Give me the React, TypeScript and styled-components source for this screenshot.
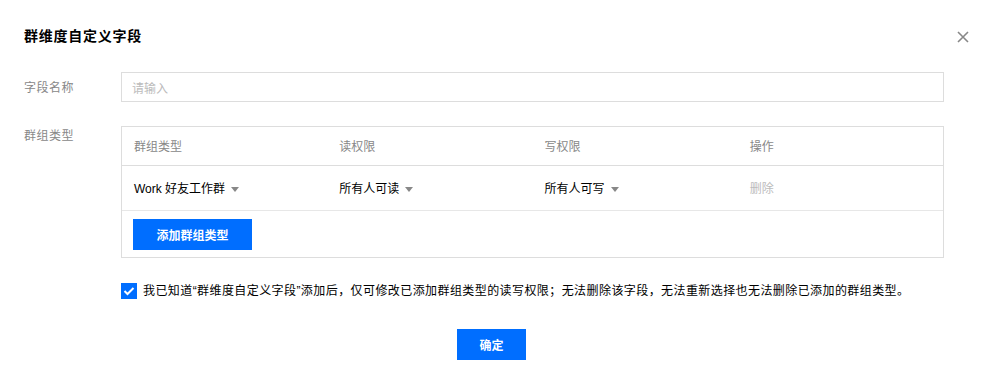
import React, { useState } from "react";
import styled, { createGlobalStyle } from "styled-components";

const GlobalStyle = createGlobalStyle`
  html, body {
    margin: 0;
    padding: 0;
    background: #ffffff;
  }
  body {
    font-family: "Noto Sans CJK SC", "Noto Sans", sans-serif;
    font-size: 12px;
    color: #000000;
  }
  * {
    box-sizing: border-box;
  }
`;

const Dialog = styled.div`
  width: 994px;
  height: 384px;
  background: #ffffff;
  display: flex;
  flex-direction: column;
`;

const Header = styled.div`
  display: flex;
  justify-content: space-between;
  align-items: center;
  padding: 22px 24px 0 24px;
  height: 48px;
`;

const Title = styled.h3`
  margin: 0;
  font-size: 14px;
  font-weight: bold;
  letter-spacing: 0.75px;
  line-height: 22px;
  color: #000000;
`;

const CloseButton = styled.button`
  width: 14px;
  height: 14px;
  padding: 0;
  border: 0;
  background: transparent;
  cursor: pointer;
  display: flex;
  align-items: center;
  justify-content: center;
  margin-top: 3px;
`;

const Body = styled.div`
  padding: 24px 50px 0 24px;
  display: flex;
  flex-direction: column;
  gap: 24px;
`;

const FormRow = styled.div`
  display: grid;
  grid-template-columns: 97px 1fr;
`;

const Label = styled.label<{ $top: number }>`
  color: #888888;
  line-height: 18px;
  letter-spacing: 0.5px;
  padding-top: ${(p) => p.$top}px;
`;

const Input = styled.input`
  width: 100%;
  height: 30px;
  border: 1px solid #dddddd;
  padding: 0 10px;
  font-family: inherit;
  font-size: 12px;
  color: #000000;
  outline: none;
  &::placeholder {
    color: #bbbbbb;
  }
`;

const Table = styled.div`
  border: 1px solid #dddddd;
`;

const Row = styled.div<{ $head?: boolean }>`
  display: grid;
  grid-template-columns: repeat(4, 1fr);
  align-items: center;
  height: ${(p) => (p.$head ? 39 : 45)}px;
  border-bottom: 1px solid ${(p) => (p.$head ? "#dddddd" : "#e7e7e7")};
`;

const HeadCell = styled.div`
  padding: 0 12px;
  color: #888888;
  line-height: 18px;
`;

const Cell = styled.div`
  padding: 0 12px;
  line-height: 18px;
`;

const Select = styled.span`
  display: inline-flex;
  align-items: center;
  gap: 6px;
  color: #000000;
  cursor: pointer;
  font-family: "Liberation Sans", "Noto Sans CJK SC", sans-serif;
`;

const Caret = styled.i`
  width: 0;
  height: 0;
  border-left: 4px solid transparent;
  border-right: 4px solid transparent;
  border-top: 5px solid #888888;
  margin-top: 1px;
`;

const LinkDisabled = styled.span`
  color: #bbbbbb;
`;

const AddRow = styled.div`
  padding: 8px 11px 7px;
`;

const PrimaryButton = styled.button<{ $width: number }>`
  display: block;
  width: ${(p) => p.$width}px;
  height: 31px;
  border: 0;
  background: #006eff;
  color: #ffffff;
  font-family: inherit;
  font-size: 12px;
  font-weight: bold;
  cursor: pointer;
  padding: 0;
`;

const Agreement = styled.label`
  display: flex;
  align-items: center;
  gap: 6px;
  margin-left: 97px;
  line-height: 18px;
  letter-spacing: 0.42px;
  font-family: "Liberation Sans", "Noto Sans CJK SC", sans-serif;
  color: #000000;
  cursor: pointer;
`;

const CheckBox = styled.span<{ $on: boolean }>`
  flex: none;
  width: 16px;
  height: 16px;
  background: ${(p) => (p.$on ? "#006eff" : "#ffffff")};
  border: 1px solid ${(p) => (p.$on ? "#006eff" : "#dddddd")};
  display: flex;
  align-items: center;
  justify-content: center;
`;

const Footer = styled.div`
  display: flex;
  justify-content: center;
  padding: 29px 35px 0 24px;
`;

const rows = [{ type: "Work 好友工作群", read: "所有人可读", write: "所有人可写" }];

export default function App() {
  const [agree, setAgree] = useState(true);

  return (
    <Dialog>
      <GlobalStyle />
      <Header>
        <Title>群维度自定义字段</Title>
        <CloseButton aria-label="关闭">
          <svg width="12" height="12" viewBox="0 0 12 12">
            <path d="M1 1 L11 11 M11 1 L1 11" stroke="#888888" strokeWidth="1.6" fill="none" />
          </svg>
        </CloseButton>
      </Header>

      <Body>
        <FormRow>
          <Label $top={6}>字段名称</Label>
          <Input placeholder="请输入" />
        </FormRow>

        <FormRow>
          <Label $top={0}>群组类型</Label>
          <Table>
            <Row $head>
              <HeadCell>群组类型</HeadCell>
              <HeadCell>读权限</HeadCell>
              <HeadCell>写权限</HeadCell>
              <HeadCell>操作</HeadCell>
            </Row>
            {rows.map((r) => (
              <Row key={r.type}>
                <Cell>
                  <Select>
                    {r.type}
                    <Caret />
                  </Select>
                </Cell>
                <Cell>
                  <Select>
                    {r.read}
                    <Caret />
                  </Select>
                </Cell>
                <Cell>
                  <Select>
                    {r.write}
                    <Caret />
                  </Select>
                </Cell>
                <Cell>
                  <LinkDisabled>删除</LinkDisabled>
                </Cell>
              </Row>
            ))}
            <AddRow>
              <PrimaryButton $width={119}>添加群组类型</PrimaryButton>
            </AddRow>
          </Table>
        </FormRow>

        <Agreement onClick={() => setAgree(!agree)}>
          <CheckBox $on={agree}>
            {agree && (
              <svg width="12" height="10" viewBox="0 0 12 10">
                <path d="M1.5 5 L4.5 8 L10.5 2" stroke="#ffffff" strokeWidth="2" fill="none" />
              </svg>
            )}
          </CheckBox>
          我已知道“群维度自定义字段”添加后，仅可修改已添加群组类型的读写权限；无法删除该字段，无法重新选择也无法删除已添加的群组类型。
        </Agreement>
      </Body>

      <Footer>
        <PrimaryButton $width={69}>确定</PrimaryButton>
      </Footer>
    </Dialog>
  );
}
